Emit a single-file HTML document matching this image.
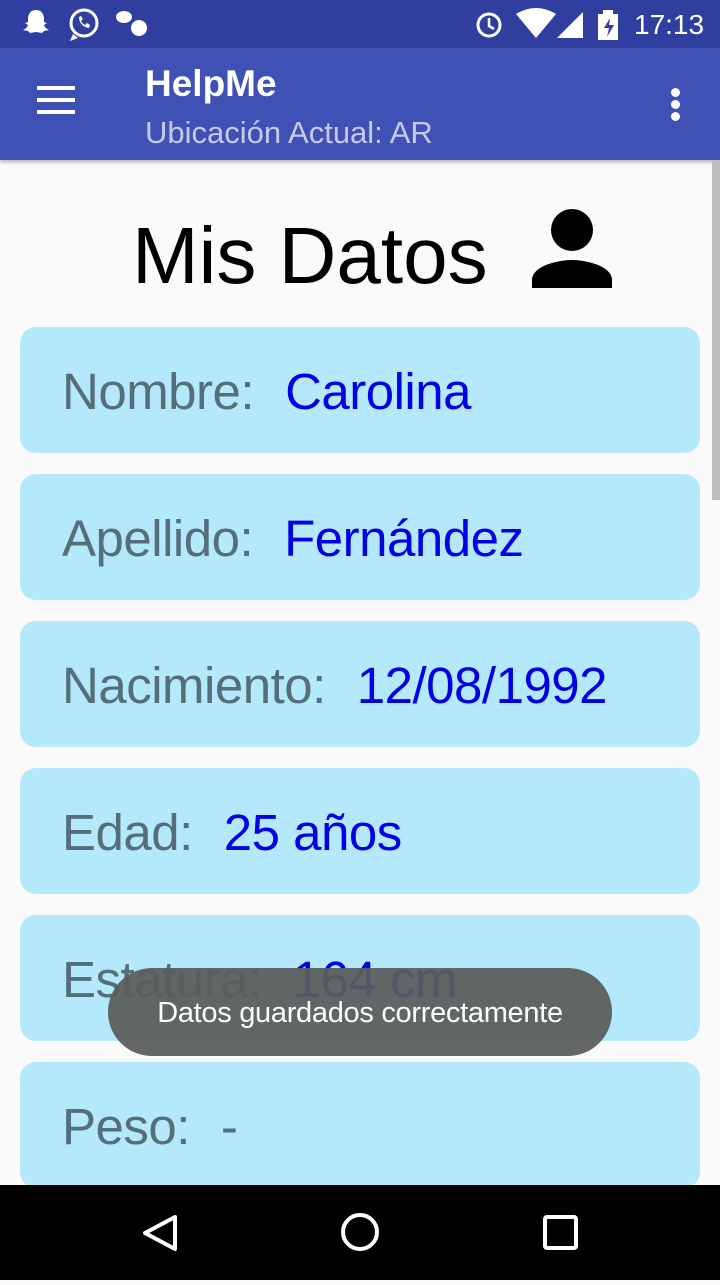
<!DOCTYPE html>
<html><head><meta charset="utf-8"><style>
*{margin:0;padding:0;box-sizing:border-box}
body{width:720px;height:1280px;position:relative;overflow:hidden;background:#fafafa;font-family:"Liberation Sans",sans-serif}
.sb{position:absolute;top:0;left:0;width:720px;height:48px;background:#303f9f;color:#fff}
.ab{position:absolute;top:48px;left:0;width:720px;height:112px;background:#3f51b5;box-shadow:0 2px 4px rgba(0,0,0,.3)}
.card{position:absolute;left:20px;width:680px;height:126px;background:#b3e9fa;border-radius:16px;font-size:51px;line-height:126px;padding-top:2px;padding-left:42px;color:#546e7a;white-space:nowrap;letter-spacing:-0.5px}
.card b{font-weight:normal;color:#0000e6;margin-left:31px}
.nav{position:absolute;top:1185px;left:0;width:720px;height:95px;background:#000}
</style></head><body>
<div class="sb">
<svg width="720" height="48" style="position:absolute;left:0;top:0">
<path d="M36 10c-6 0-8 5-8 9v3l-3 1 3 2c-1 3-3 4-5 5l5 1 2 2 6-1 6 1 2-2 5-1c-2-1-4-2-5-5l3-2-3-1v-3c0-4-2-9-8-9z" fill="#fff"/>
<circle cx="84" cy="23" r="13" fill="none" stroke="#fff" stroke-width="3"/><path d="M73 34l-3 7 8-3" fill="#fff"/><path d="M79 17c0 6 4 10 10 11l1-3-3-2-2 2c-2-1-3-2-4-4l2-2-2-3z" fill="#fff"/>
<ellipse cx="124" cy="17" rx="8" ry="6" fill="#fff"/><ellipse cx="139" cy="28" rx="8" ry="8" fill="#fff"/>
<circle cx="489" cy="25" r="11" fill="none" stroke="#fff" stroke-width="3"/><path d="M489 18v8l5 3" stroke="#fff" stroke-width="2.5" fill="none"/>
<path d="M516 14q20-12 40 0l-20 24z" fill="#fff"/>
<path d="M583 12v26h-26z" fill="#fff"/>
<rect x="598" y="14" width="20" height="26" fill="#fff"/><rect x="603" y="10" width="10" height="4" fill="#fff"/><path d="M610 18l-6 10h5l-2 9 7-12h-5z" fill="#303f9f"/>
<text x="634" y="34" font-size="28" fill="#fff" font-family="Liberation Sans">17:13</text>
</svg></div>
<div class="ab">
<div style="position:absolute;left:37px;top:38px;width:38px;height:4px;background:#fff"></div>
<div style="position:absolute;left:37px;top:50px;width:38px;height:4px;background:#fff"></div>
<div style="position:absolute;left:37px;top:62px;width:38px;height:4px;background:#fff"></div>
<div style="position:absolute;left:145px;top:15px;font-size:37px;font-weight:bold;color:#fff">HelpMe</div>
<div style="position:absolute;left:145px;top:67px;font-size:31px;color:#c5cae9">Ubicación Actual: AR</div>
<div style="position:absolute;left:671px;top:40px;width:9px;height:9px;border-radius:50%;background:#fff;box-shadow:0 12px 0 #fff,0 24px 0 #fff"></div>
</div>
<div style="position:absolute;left:712px;top:160px;width:8px;height:340px;background:#bdbdbd"></div>
<div style="position:absolute;left:132px;top:210px;font-size:80px;color:#000">Mis Datos</div>
<svg width="84" height="82" style="position:absolute;left:530px;top:208px"><circle cx="42" cy="22" r="21" fill="#000"/><path d="M2 80v-8c0-14 26-20 40-20s40 6 40 20v8z" fill="#000"/></svg>
<div class="card" style="top:327px">Nombre:<b>Carolina</b></div>
<div class="card" style="top:474px">Apellido:<b>Fernández</b></div>
<div class="card" style="top:621px">Nacimiento:<b>12/08/1992</b></div>
<div class="card" style="top:768px">Edad:<b>25 años</b></div>
<div class="card" style="top:915px">Estatura:<b>164 cm</b></div>
<div class="card" style="top:1062px">Peso:<b style="color:#546e7a">-</b></div>
<div style="position:absolute;left:108px;top:968px;width:504px;height:88px;border-radius:44px;background:rgba(90,92,92,.94);color:#fff;font-size:29px;text-align:center;line-height:90px;letter-spacing:-0.3px">Datos guardados correctamente</div>
<div class="nav"><svg width="720" height="95">
<path d="M175 32l-30 16 30 16z" fill="none" stroke="#fff" stroke-width="4" stroke-linejoin="round"/>
<circle cx="360" cy="47" r="17" fill="none" stroke="#fff" stroke-width="4"/>
<rect x="545" y="32" width="31" height="31" rx="2" fill="none" stroke="#fff" stroke-width="4"/>
</svg></div>
</body></html>
